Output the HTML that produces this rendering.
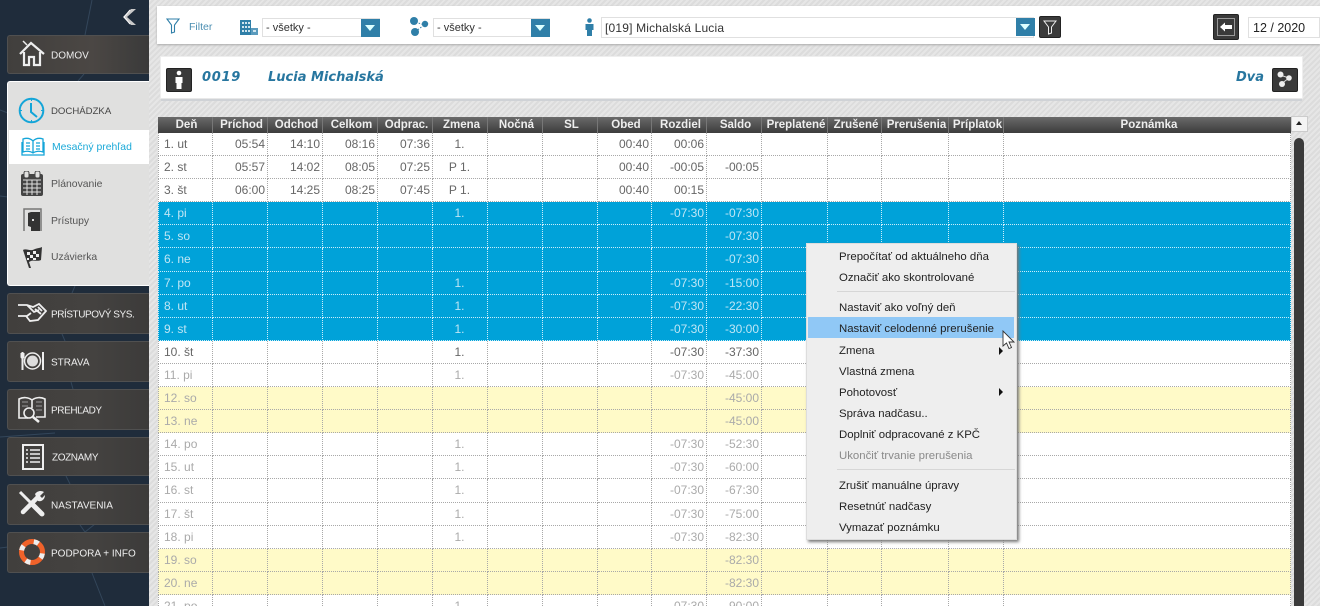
<!DOCTYPE html>
<html><head><meta charset="utf-8"><style>
*{box-sizing:border-box}
html,body{margin:0;padding:0;width:1320px;height:606px;overflow:hidden;background:#e2e2e2;font-family:"Liberation Sans",sans-serif}
#wrap{position:relative;width:1320px;height:606px;overflow:hidden}
.a{position:absolute}
#hatch{left:149px;top:0;width:1171px;height:606px;background:repeating-linear-gradient(135deg,#e6e6e6 0 2px,#dcdcdc 2px 4px)}
#side{left:0;top:0;width:149px;height:606px;background:#1f2c3b;overflow:hidden}
.btn{left:7px;width:142px;background:linear-gradient(90deg,#413f3d,#444240 60%,#3c3b3a);border:1px solid #505050;border-right:0;border-radius:3px 0 0 3px;color:#eee;font-size:10px}
.btn span{position:absolute;left:43px;top:calc(50% + 1px);transform:translateY(-50%);white-space:nowrap}
.sub{font-size:10.4px;color:#555;left:51px;white-space:nowrap}
table{border-collapse:separate;border-spacing:0;table-layout:fixed;position:absolute;left:158px;top:133px;width:1133px;font-size:12px;color:#666}
td{height:23px;padding:0 2px 0 5px;border-right:1px dotted #a8a8a8;border-bottom:1px dotted #a8a8a8;white-space:nowrap;overflow:hidden;background:#fff}
tr:nth-child(6) td,tr:nth-child(16) td{height:24px;padding-bottom:1px}
td:first-child{border-left:1px dotted #a8a8a8}
td.r{text-align:right}td.c{text-align:center;padding-right:6px}
tr.b td{background:#00a2d9;color:#bfe6f5;border-color:#cdeefa}
tr.g td{color:#aaa}
tr.y td{background:#fffac8;color:#aaa}
#head div{position:absolute;top:117px;height:16px;background:linear-gradient(#6a6a6a,#3c3c3c);color:#eee;font:bold 11.5px/17px "Liberation Sans",sans-serif;text-align:center;text-indent:3px;white-space:nowrap;overflow:hidden;border-right:1px solid #777}
.inp{background:#fff;border:1px solid #e0e0e0;font-size:11px;color:#333;line-height:17px;padding-left:3px;padding-top:1px;white-space:nowrap}
.dd{width:19px;height:18px;background:#2f7fa8}
.dd:after{content:"";position:absolute;left:4px;top:6px;border:5.5px solid transparent;border-top:6px solid #dff;border-bottom:0}
.dk{background:#3a3a3a;border:1px solid #222;border-radius:2px}
.m{position:absolute;left:32px;margin-top:1px;font-size:11.4px;color:#222;white-space:nowrap;line-height:14px}
.sep{position:absolute;left:30px;width:178px;height:1px;background:#d6d6d6}
.nm{font:italic bold 13px/18px "DejaVu Sans",sans-serif;color:#27769f}
</style></head><body><div id="wrap">
<div class="a" id="hatch"></div>
<div class="a" id="side">
<svg class="a" style="left:0;top:0" width="149" height="606" fill="none" stroke="#33465a" stroke-width="1"><path d="M92 0L85 35M84 74L78 81M0 110L8 113M0 196L8 197M75 286L72 293M62 334L65 341M71 382L73 389M0 437L55 433M66 476L70 484M80 525L85 532L95 524M0 548L8 547M92 573L105 606"/></svg>
<svg class="a" style="left:121px;top:8px" width="16" height="18"><path d="M15 1L6 9L15 17H10L2 9L10 1Z" fill="#c9c9c9"/><path d="M9 2L3 9L9 16" stroke="#fff" fill="none"/></svg>
<div class="a btn" style="top:35px;height:39px;background:linear-gradient(90deg,#413f3d,#4b4744 60%,#3a3a3a)"><span>DOMOV</span></div>
<svg class="a" style="left:18px;top:40px" width="28" height="27" fill="none" stroke="#eee" stroke-width="2.200"><path d="M2 14L13 3L26 14M6 12V25H11V17H16V25H22V12"/><path d="M5 1L9 5" stroke-width="1.500"/></svg>
<div class="a" style="left:7px;top:81px;width:142px;height:205px;background:#e0e0df;border:1px solid #fff;border-right:0;border-radius:3px 0 0 3px"></div>
<div class="a" style="left:9px;top:130px;width:140px;height:34px;background:#fff"></div>
<div class="a sub" style="top:105px;color:#444;font-size:9.6px;line-height:13px">DOCHÁDZKA</div>
<div class="a sub" style="top:142px;left:52px;color:#1aa9d8">Mesačný prehľad</div>
<div class="a sub" style="top:179px">Plánovanie</div>
<div class="a sub" style="top:216px">Prístupy</div>
<div class="a sub" style="top:252px">Uzávierka</div>
<svg class="a" style="left:18px;top:97px" width="27" height="27" fill="none" stroke="#14a5d8" stroke-width="2"><circle cx="13.500" cy="13.500" r="11.800"/><path d="M13 6V15L19 20"/><path d="M13.500 2V4M13.500 23V25M2 13.500H4M23 13.500H25" stroke-width="1"/></svg>
<svg class="a" style="left:21px;top:137px" width="24" height="19" fill="none" stroke="#14a5d8" stroke-width="1.300"><path d="M12 4C9 1 5 1 2 2V15C5 14 9 14 12 16C15 14 19 14 22 15V2C19 1 15 1 12 4ZM12 4V16M1 5V18H23V5M5 6H9M5 9H9M5 12H9M15 6H19M15 9H19M15 12H19"/></svg>
<svg class="a" style="left:21px;top:171px" width="23" height="25"><rect x="0" y="3" width="22" height="22" rx="2" fill="#444"/><rect x="3" y="0" width="5" height="7" rx="2" fill="#e0e0df" stroke="#444"/><rect x="14" y="0" width="5" height="7" rx="2" fill="#e0e0df" stroke="#444"/><path d="M2 9H20M2 13H20M2 17H20M2 21H20M6 9V24M11 9V24M16 9V24" stroke="#e0e0df" fill="none"/></svg>
<svg class="a" style="left:23px;top:208px" width="20" height="24"><path d="M1 23V1H18V23" fill="none" stroke="#777" stroke-width="1.500"/><path d="M8 4H17V23H8V19L5 18V5Z" fill="#333"/><rect x="9" y="11" width="2" height="2" fill="#ddd"/></svg>
<svg class="a" style="left:22px;top:246px" width="22" height="22"><path d="M1 4C5 2 8 6 13 3C16 2 18 2 20 1L19 14C15 16 11 13 7 16L9 22L7 22L1 4Z" fill="#333"/><path d="M5 6h3v3h-3zM11 5h3v3h-3zM8 9h3v3h-3zM14 8h3v3h-3zM5 12h2v2h-2zM11 12h3v2h-3z" fill="#eee"/></svg>
<div class="a btn" style="top:293px;height:41px"><span style="letter-spacing:-.45px">PRÍSTUPOVÝ SYS.</span></div>
<svg class="a" style="left:17px;top:302px" width="30" height="22" fill="none" stroke="#eee" stroke-width="1.800"><path d="M1 3H10L16 5L22 2L29 9L21 18L13 19L9 14H1M10 3L17 10L22 8M10 14L14 11M21 5L25 9M18 7L24 12"/></svg>
<div class="a btn" style="top:341px;height:41px"><span>STRAVA</span></div>
<svg class="a" style="left:20px;top:351px" width="25" height="20" fill="none" stroke="#eee"><circle cx="12.500" cy="10" r="8" stroke-width="1.500"/><circle cx="12.500" cy="10" r="5.500" fill="#ddd" stroke="none"/><path d="M2.500 1V19M23 1V19" stroke-width="2"/><path d="M1 2V6C1 7.500 4 7.500 4 6V2"/></svg>
<div class="a btn" style="top:389px;height:41px"><span style="letter-spacing:-.4px">PREHĽADY</span></div>
<svg class="a" style="left:18px;top:396px" width="29" height="28" fill="none" stroke="#eee" stroke-width="1.600"><path d="M14 4C10 1 5 1 1 3V22H10M14 4C18 1 23 1 27 3V21H18M14 4V12"/><circle cx="11" cy="17" r="5"/><path d="M15 21L21 26" stroke-width="2.500"/><path d="M18 6H24M18 10H24M18 14H24M4 6H10M4 10H10" stroke-width="1" stroke="#999"/></svg>
<div class="a btn" style="top:437px;height:39px"><span style="left:44px;letter-spacing:-.4px">ZOZNAMY</span></div>
<svg class="a" style="left:22px;top:444px" width="22" height="26" fill="none" stroke="#eee"><rect x="1" y="1" width="20" height="24" stroke-width="2"/><path d="M8 6H18M8 10H18M8 14H18M8 18H18" stroke-width="1.500"/><path d="M4 6H6M4 10H6M4 14H6M4 18H6" stroke-width="1.500"/></svg>
<div class="a btn" style="top:484px;height:41px"><span>NASTAVENIA</span></div>
<svg class="a" style="left:18px;top:490px" width="27" height="27" fill="none" stroke="#eee"><path d="M2 2L24 24" stroke-width="3"/><path d="M15 15L24 24" stroke-width="5" stroke-linecap="round"/><path d="M20 7L5 22" stroke-width="4.500" stroke-linecap="round"/><path d="M17 4C19 1 23 0 26 2L22 6L24 8L27 5C27 9 24 12 20 11Z" fill="#eee" stroke="none"/></svg>
<div class="a btn" style="top:532px;height:41px"><span>PODPORA + INFO</span></div>
<svg class="a" style="left:18px;top:538px" width="28" height="28" fill="none"><circle cx="14" cy="14" r="10.500" stroke="#f0622a" stroke-width="5"/><circle cx="14" cy="14" r="10.500" stroke="#eee" stroke-width="5" stroke-dasharray="5 11.500" stroke-dashoffset="-1.500"/></svg>
</div>

<div class="a" style="left:157px;top:6px;width:1163px;height:38px;background:#fff;box-shadow:0 1px 2px #aaa"></div>
<svg class="a" style="left:166px;top:18px" width="14" height="16" fill="none" stroke="#2f7fa8" stroke-width="1.100"><path d="M1 1H13L8.500 7V14L5.500 15V7Z"/></svg>
<div class="a" style="left:189px;top:21px;font-size:10.5px;line-height:13px;color:#4c8fb2">Filter</div>
<svg class="a" style="left:240px;top:20px" width="18" height="16"><rect x="0" y="0" width="11" height="15" fill="#2f7fa8"/><rect x="11" y="8" width="7" height="7" fill="#5a9bbd"/><path d="M2 2h2v2h-2zM5 2h2v2h-2zM8 2h2v2h-2zM2 6h2v2h-2zM5 6h2v2h-2zM8 6h2v2h-2zM2 10h2v2h-2zM5 10h2v2h-2zM8 10h2v2h-2zM13 10h3v2h-3z" fill="#cfe4ee"/></svg>
<div class="a inp" style="left:262px;top:18px;width:118px;height:19px">- všetky -</div><div class="a dd" style="left:360.500px;top:18.500px"></div>
<svg class="a" style="left:408px;top:16px" width="22" height="21" fill="none"><path d="M5 5L16 9L7 16" stroke="#2f7fa8" stroke-dasharray="1.500 1.500"/><circle cx="6" cy="5" r="4" fill="#2f7fa8"/><circle cx="17" cy="8" r="3.200" fill="#2f7fa8"/><circle cx="7" cy="16" r="4" fill="#2f7fa8"/></svg>
<div class="a inp" style="left:433px;top:18px;width:117px;height:19px">- všetky -</div><div class="a dd" style="left:531px;top:18.500px"></div>
<svg class="a" style="left:584px;top:18px" width="11" height="18"><circle cx="5.500" cy="2.500" r="2.300" fill="#2f7fa8"/><path d="M1.500 6H9.500V12H8V18H3V12H1.500Z" fill="#2f7fa8"/></svg>
<div class="a inp" style="left:601px;top:17px;width:433px;height:21px;line-height:18px;font-size:12px;letter-spacing:.18px;color:#333">[019] Michalská Lucia</div><div class="a dd" style="left:1015.500px;top:18px"></div>
<div class="a dk" style="left:1039px;top:16px;width:22px;height:22px"></div>
<svg class="a" style="left:1043px;top:20px" width="14" height="15" fill="none" stroke="#eee"><path d="M1 1H13L8.500 7V13L5.500 14V7Z"/></svg>
<div class="a dk" style="left:1213px;top:14px;width:26px;height:26px"></div>
<svg class="a" style="left:1217px;top:18px" width="18" height="18"><rect x=".5" y=".5" width="17" height="17" fill="none" stroke="#999"/><path d="M3 9L8 4.500V7H15V11H8V13.500Z" fill="#fff"/></svg>
<div class="a inp" style="left:1248px;top:17px;width:72px;height:21px;line-height:18px;padding-left:4px;font-size:12.500px;color:#222">12 / 2020</div>

<div class="a" style="left:160px;top:56px;width:1143px;height:43px;background:#fff;border:1px solid #eee;border-bottom-color:#e8e8e8;box-shadow:0 3px 0 -1px #cfd2d6"></div>
<div class="a dk" style="left:166px;top:68px;width:26px;height:24px"></div>
<svg class="a" style="left:174px;top:70px" width="10" height="20"><circle cx="5" cy="3" r="2.300" fill="#fff"/><path d="M1.500 7H8.500V13H7.500V19H2.500V13H1.500Z" fill="#fff"/></svg>
<div class="a nm" style="left:202px;top:69px;letter-spacing:.7px">0019</div>
<div class="a nm" style="left:268px;top:69px">Lucia Michalská</div>
<div class="a nm" style="left:1236px;top:69px">Dva</div>
<div class="a dk" style="left:1272px;top:68px;width:26px;height:24px"></div>
<svg class="a" style="left:1275px;top:71px" width="20" height="18"><path d="M5 4L14 7L6 13" stroke="#ddd" fill="none"/><circle cx="5.500" cy="3.500" r="3" fill="#eee"/><circle cx="14" cy="7" r="2.800" fill="#eee"/><circle cx="7" cy="13" r="3" fill="#eee"/></svg>

<div id="head">
<div style="left:158px;width:55px">Deň</div><div style="left:213px;width:55px">Príchod</div><div style="left:268px;width:55px">Odchod</div><div style="left:323px;width:55px">Celkom</div><div style="left:378px;width:55px">Odprac.</div><div style="left:433px;width:55px">Zmena</div><div style="left:488px;width:55px">Nočná</div><div style="left:543px;width:55px">SL</div><div style="left:598px;width:54px">Obed</div><div style="left:652px;width:55px">Rozdiel</div><div style="left:707px;width:55px">Saldo</div><div style="left:762px;width:66px">Preplatené</div><div style="left:828px;width:54px">Zrušené</div><div style="left:882px;width:67px">Prerušenia</div><div style="left:949px;width:55px">Príplatok</div><div style="left:1004px;width:287px;border:0">Poznámka</div>
</div>

<table>
<colgroup><col style="width:55px"><col style="width:55px"><col style="width:55px"><col style="width:55px"><col style="width:55px"><col style="width:55px"><col style="width:55px"><col style="width:55px"><col style="width:54px"><col style="width:55px"><col style="width:55px"><col style="width:66px"><col style="width:54px"><col style="width:67px"><col style="width:55px"><col style="width:287px"></colgroup>
<tr><td>1. ut</td><td class="r">05:54</td><td class="r">14:10</td><td class="r">08:16</td><td class="r">07:36</td><td class="c">1.</td><td></td><td></td><td class="r">00:40</td><td class="r">00:06</td><td class="r"></td><td></td><td></td><td></td><td></td><td></td></tr>
<tr><td>2. st</td><td class="r">05:57</td><td class="r">14:02</td><td class="r">08:05</td><td class="r">07:25</td><td class="c">P 1.</td><td></td><td></td><td class="r">00:40</td><td class="r">-00:05</td><td class="r">-00:05</td><td></td><td></td><td></td><td></td><td></td></tr>
<tr><td>3. št</td><td class="r">06:00</td><td class="r">14:25</td><td class="r">08:25</td><td class="r">07:45</td><td class="c">P 1.</td><td></td><td></td><td class="r">00:40</td><td class="r">00:15</td><td class="r"></td><td></td><td></td><td></td><td></td><td></td></tr>
<tr class="b"><td>4. pi</td><td></td><td></td><td></td><td></td><td class="c">1.</td><td></td><td></td><td></td><td class="r">-07:30</td><td class="r">-07:30</td><td></td><td></td><td></td><td></td><td></td></tr>
<tr class="b"><td>5. so</td><td></td><td></td><td></td><td></td><td class="c"></td><td></td><td></td><td></td><td class="r"></td><td class="r">-07:30</td><td></td><td></td><td></td><td></td><td></td></tr>
<tr class="b"><td>6. ne</td><td></td><td></td><td></td><td></td><td class="c"></td><td></td><td></td><td></td><td class="r"></td><td class="r">-07:30</td><td></td><td></td><td></td><td></td><td></td></tr>
<tr class="b"><td>7. po</td><td></td><td></td><td></td><td></td><td class="c">1.</td><td></td><td></td><td></td><td class="r">-07:30</td><td class="r">-15:00</td><td></td><td></td><td></td><td></td><td></td></tr>
<tr class="b"><td>8. ut</td><td></td><td></td><td></td><td></td><td class="c">1.</td><td></td><td></td><td></td><td class="r">-07:30</td><td class="r">-22:30</td><td></td><td></td><td></td><td></td><td></td></tr>
<tr class="b"><td>9. st</td><td></td><td></td><td></td><td></td><td class="c">1.</td><td></td><td></td><td></td><td class="r">-07:30</td><td class="r">-30:00</td><td></td><td></td><td></td><td></td><td></td></tr>
<tr><td>10. št</td><td></td><td></td><td></td><td></td><td class="c">1.</td><td></td><td></td><td></td><td class="r">-07:30</td><td class="r">-37:30</td><td></td><td></td><td></td><td></td><td></td></tr>
<tr class="g"><td>11. pi</td><td></td><td></td><td></td><td></td><td class="c">1.</td><td></td><td></td><td></td><td class="r">-07:30</td><td class="r">-45:00</td><td></td><td></td><td></td><td></td><td></td></tr>
<tr class="y"><td>12. so</td><td></td><td></td><td></td><td></td><td class="c"></td><td></td><td></td><td></td><td class="r"></td><td class="r">-45:00</td><td></td><td></td><td></td><td></td><td></td></tr>
<tr class="y"><td>13. ne</td><td></td><td></td><td></td><td></td><td class="c"></td><td></td><td></td><td></td><td class="r"></td><td class="r">-45:00</td><td></td><td></td><td></td><td></td><td></td></tr>
<tr class="g"><td>14. po</td><td></td><td></td><td></td><td></td><td class="c">1.</td><td></td><td></td><td></td><td class="r">-07:30</td><td class="r">-52:30</td><td></td><td></td><td></td><td></td><td></td></tr>
<tr class="g"><td>15. ut</td><td></td><td></td><td></td><td></td><td class="c">1.</td><td></td><td></td><td></td><td class="r">-07:30</td><td class="r">-60:00</td><td></td><td></td><td></td><td></td><td></td></tr>
<tr class="g"><td>16. st</td><td></td><td></td><td></td><td></td><td class="c">1.</td><td></td><td></td><td></td><td class="r">-07:30</td><td class="r">-67:30</td><td></td><td></td><td></td><td></td><td></td></tr>
<tr class="g"><td>17. št</td><td></td><td></td><td></td><td></td><td class="c">1.</td><td></td><td></td><td></td><td class="r">-07:30</td><td class="r">-75:00</td><td></td><td></td><td></td><td></td><td></td></tr>
<tr class="g"><td>18. pi</td><td></td><td></td><td></td><td></td><td class="c">1.</td><td></td><td></td><td></td><td class="r">-07:30</td><td class="r">-82:30</td><td></td><td></td><td></td><td></td><td></td></tr>
<tr class="y"><td>19. so</td><td></td><td></td><td></td><td></td><td class="c"></td><td></td><td></td><td></td><td class="r"></td><td class="r">-82:30</td><td></td><td></td><td></td><td></td><td></td></tr>
<tr class="y"><td>20. ne</td><td></td><td></td><td></td><td></td><td class="c"></td><td></td><td></td><td></td><td class="r"></td><td class="r">-82:30</td><td></td><td></td><td></td><td></td><td></td></tr>
<tr class="g"><td>21. po</td><td></td><td></td><td></td><td></td><td class="c">1.</td><td></td><td></td><td></td><td class="r">-07:30</td><td class="r">-90:00</td><td></td><td></td><td></td><td></td><td></td></tr>
</table>

<div class="a" style="left:1291px;top:116px;width:17px;height:16px;background:#f4f4f4;border:1px solid #ccc"></div>
<div class="a" style="left:1295.500px;top:121px;border:3.500px solid transparent;border-bottom:4px solid #222;border-top:0"></div>
<div class="a" style="left:1294px;top:138px;width:10px;height:470px;background:#3a3a3a;border-radius:5px 5px 0 0"></div>

<div class="a" style="left:806px;top:243px;width:211px;height:297px;background:#eee;border:1px solid #ddd;box-shadow:2px 2px 3px #777">
<div class="m" style="top:5px">Prepočítať od aktuálneho dňa</div>
<div class="m" style="top:26px">Označiť ako skontrolované</div>
<div class="sep" style="top:47px"></div>
<div class="m" style="top:56px">Nastaviť ako voľný deň</div>
<div style="position:absolute;left:1px;top:73px;width:206px;height:21px;background:#90c8f6"></div>
<div class="m" style="top:77px">Nastaviť celodenné prerušenie</div>
<div class="m" style="top:99px">Zmena</div>
<div class="m" style="top:120px">Vlastná zmena</div>
<div class="m" style="top:141px">Pohotovosť</div>
<div class="m" style="top:162px">Správa nadčasu..</div>
<div class="m" style="top:183px">Doplniť odpracované z KPČ</div>
<div class="m" style="top:204px;color:#8a8a8a">Ukončiť trvanie prerušenia</div>
<div class="sep" style="top:225px"></div>
<div class="m" style="top:234px">Zrušiť manuálne úpravy</div>
<div class="m" style="top:255px">Resetnúť nadčasy</div>
<div class="m" style="top:276px">Vymazať poznámku</div>
<div style="position:absolute;left:192px;top:103px;border:4px solid transparent;border-left:4px solid #111;border-right:0"></div>
<div style="position:absolute;left:192px;top:144px;border:4px solid transparent;border-left:4px solid #111;border-right:0"></div>
</div>
<svg class="a" style="left:1002px;top:330px" width="14" height="20"><path d="M1 1V16L4.500 13L7 18.500L9.500 17.500L7 12H12Z" fill="#fff" stroke="#333" stroke-width=".9"/></svg>
</div></body></html>
